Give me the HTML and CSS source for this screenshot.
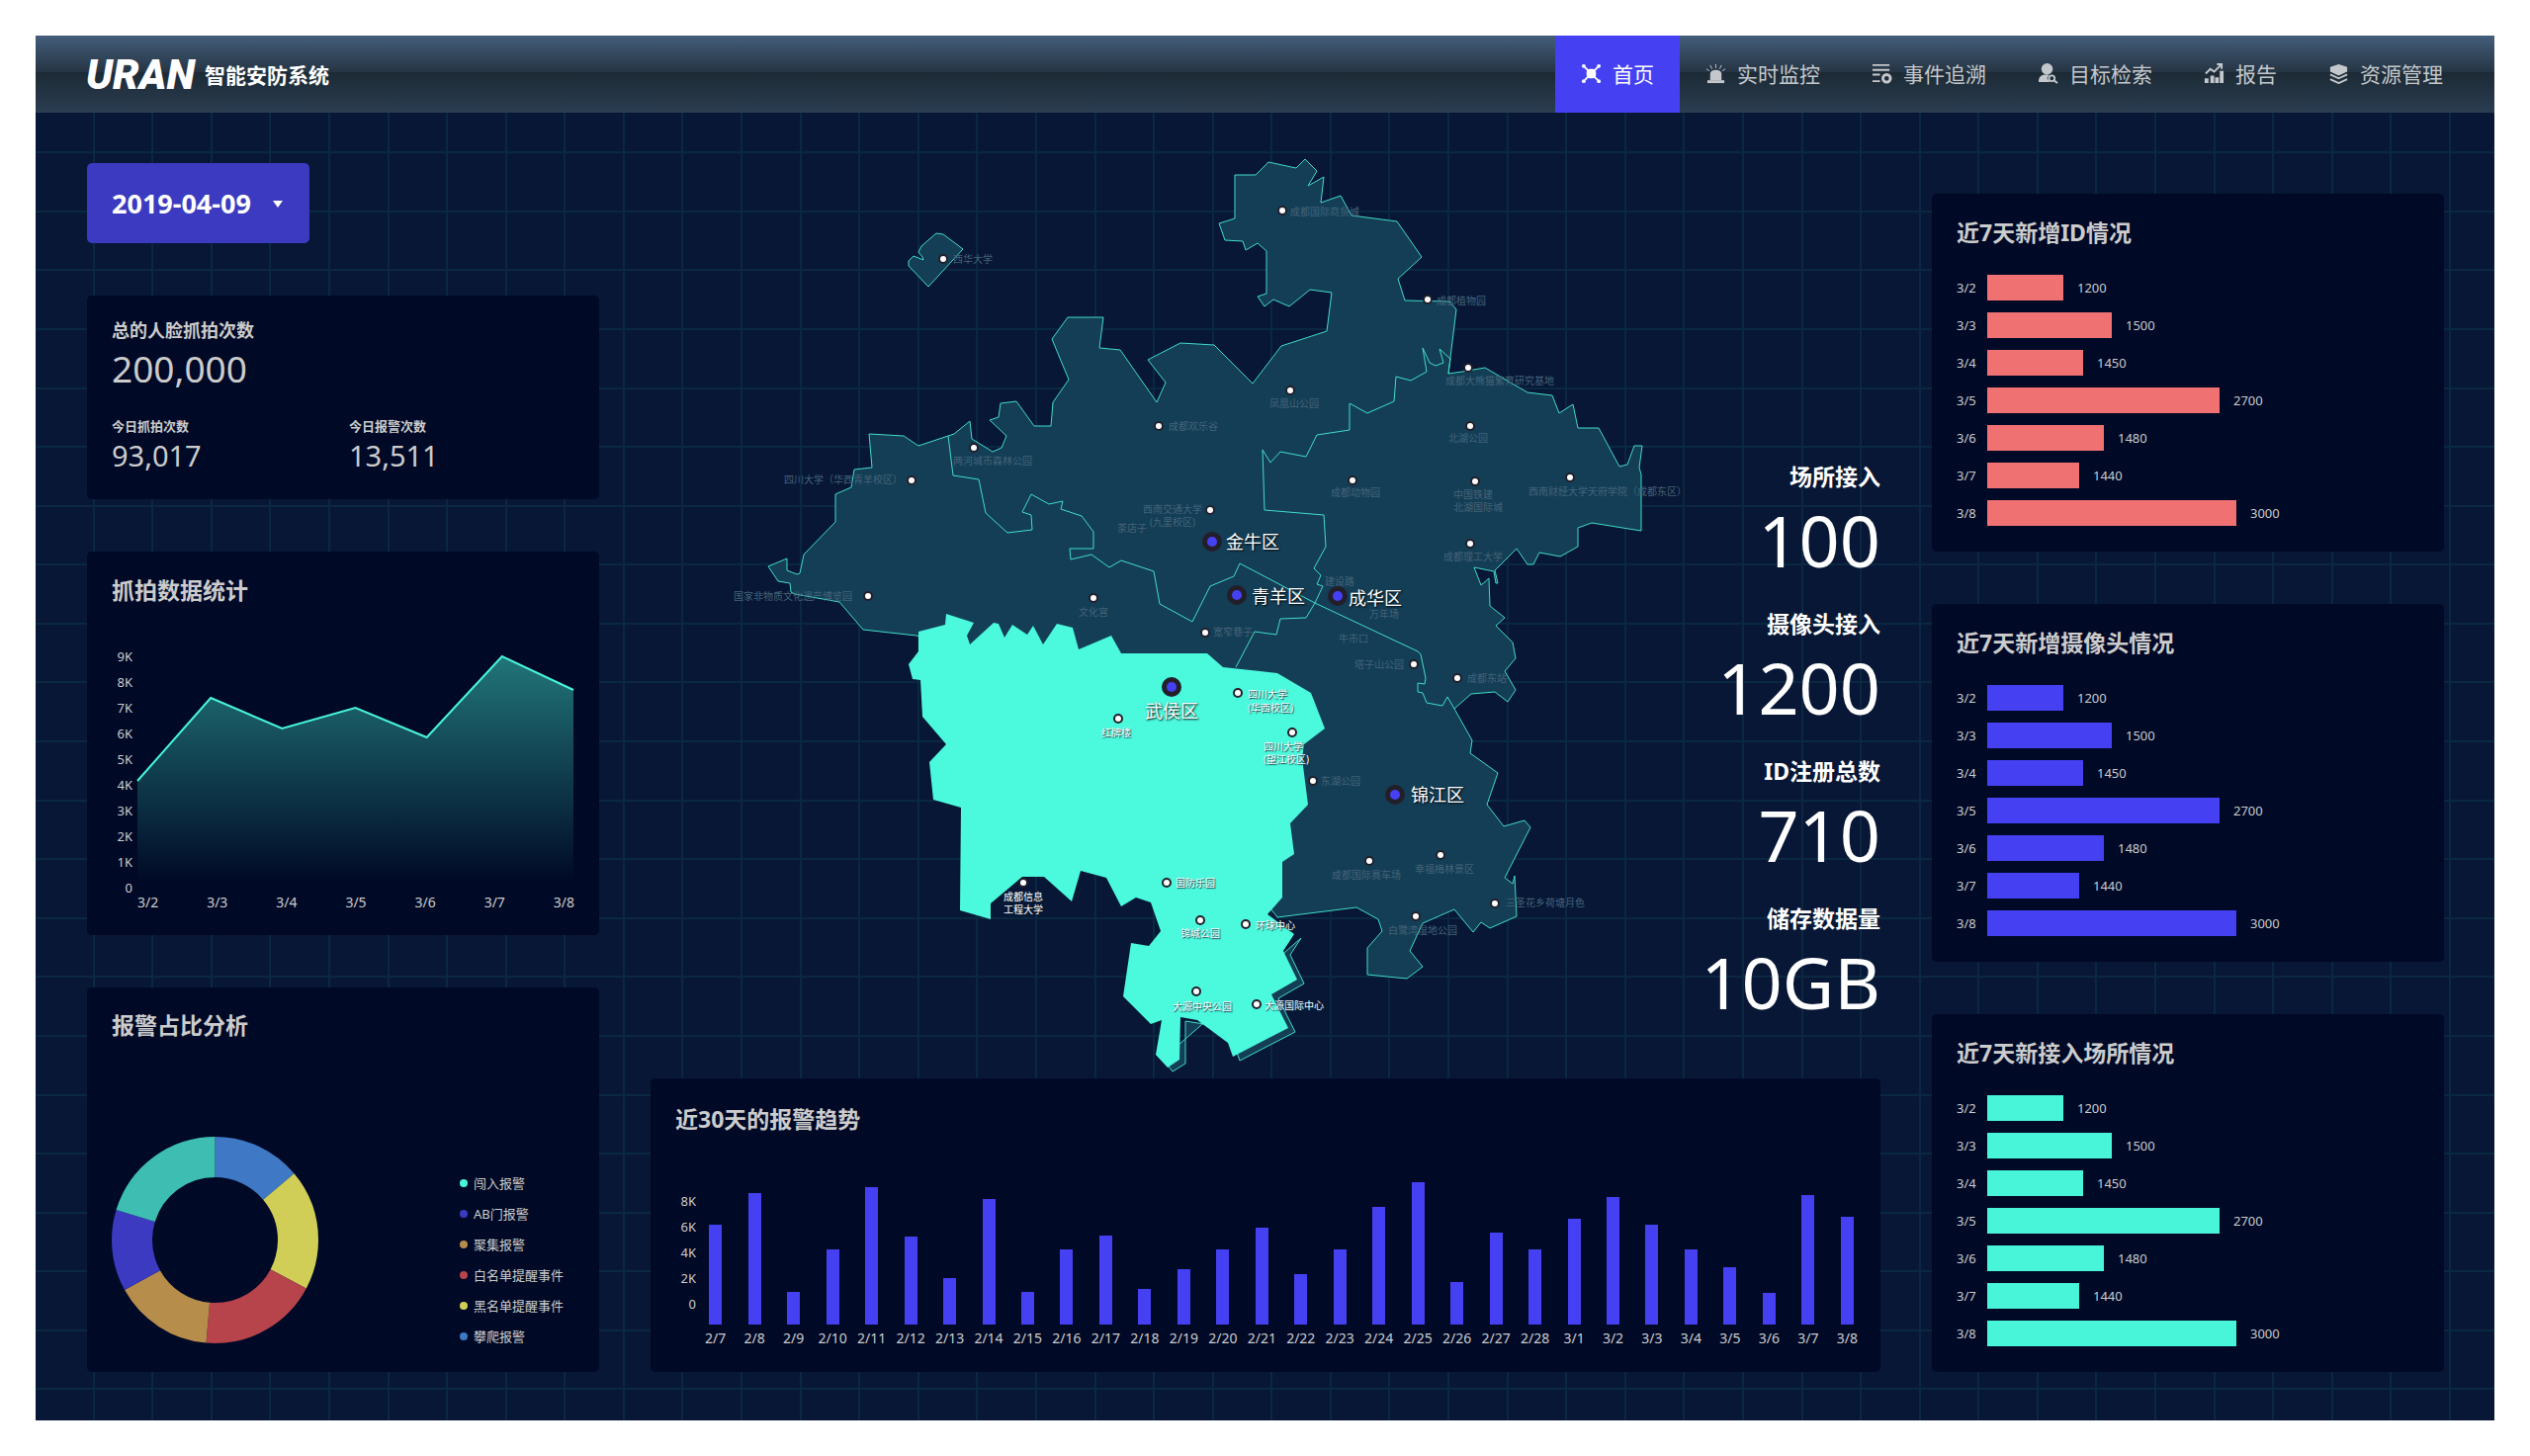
FILE: index.html
```html
<!DOCTYPE html>
<html lang="zh-CN">
<head>
  <meta charset="UTF-8">
  <meta name="viewport" content="width=device-width, initial-scale=1">
  <title>智能安防系统</title>
  <link rel="stylesheet" href="styles.css">
</head>
<body>

<div class="screen">

  <header class="topbar">
    <a class="brand" href="#">
      <span class="logo">URAN</span>
      <span class="brand-name">智能安防系统</span>
    </a>
    <nav class="nav">
      <a class="active" href="#">
        <svg viewBox="0 0 22 22"><path d="M4 4l14 14M18 4L4 18" stroke="currentColor" stroke-width="2"/><rect x="6" y="6" width="10" height="10" rx="4"/><circle cx="3" cy="3" r="2"/><circle cx="19" cy="3" r="2"/><circle cx="3" cy="19" r="2"/><circle cx="19" cy="19" r="2"/></svg>
        首页
      </a>
      <a href="#">
        <svg viewBox="0 0 22 22"><path d="M5 18v-7a6 4 0 0 1 12 0v7z"/><path d="M2 18h18v3H2z"/><path d="M11 1v4M5 2l2 4M17 2l-2 4M1 6l3 2M21 6l-3 2" stroke="currentColor" stroke-width="1"/></svg>
        实时监控
      </a>
      <a href="#">
        <svg viewBox="0 0 22 22"><path d="M1 1h18v2H1zM1 6h18v2H1zM1 11h8v2H1zM1 18h8v2H1z"/><circle cx="16" cy="16" r="4" fill="none" stroke="currentColor" stroke-width="3"/></svg>
        事件追溯
      </a>
      <a href="#">
        <svg viewBox="0 0 22 22"><circle cx="10" cy="6" r="6"/><path d="M1 20c0-6 3-8 7-8h4l-2 4 3 4z"/><circle cx="15" cy="16" r="3" fill="none" stroke="currentColor" stroke-width="2"/><path d="M17 18l4 3" stroke="currentColor" stroke-width="2"/></svg>
        目标检索
      </a>
      <a href="#">
        <svg viewBox="0 0 22 22"><path d="M1 16h4v5H1zM7 13h4v8H7zM12 15h4v6h-4zM17 8h4v13h-4z"/><path d="M2 11l5-5 4 3 7-7M14 1h5v5" fill="none" stroke="currentColor" stroke-width="2"/></svg>
        报告
      </a>
      <a href="#">
        <svg viewBox="0 0 22 22"><path d="M11 1l9 3v5l-9 4-9-4V4z"/><path d="M2 12l9 4 9-4M2 17l9 4 9-4" fill="none" stroke="currentColor" stroke-width="2"/></svg>
        资源管理
      </a>
    </nav>
  </header>

  <main class="board">

    <!-- left column -->
    <section class="column">
      <div class="date-picker">
        <select aria-label="日期">
          <option>2019-04-09</option>
        </select>
      </div>

      <div class="card totals">
        <h3>总的人脸抓拍次数</h3>
        <p class="total">200,000</p>
        <div class="today">
          <div>
            <h4>今日抓拍次数</h4>
            <p>93,017</p>
          </div>
          <div>
            <h4>今日报警次数</h4>
            <p>13,511</p>
          </div>
        </div>
      </div>

      <div class="card capture">
        <h2>抓拍数据统计</h2>
        <div class="area-chart">
          <ul class="y-axis">
            <li>9K</li><li>8K</li><li>7K</li><li>6K</li><li>5K</li><li>4K</li><li>3K</li><li>2K</li><li>1K</li><li>0</li>
          </ul>
          <div class="area-plot">
            <svg viewBox="0 0 441 229" preserveAspectRatio="none">
              <defs>
                <linearGradient id="areaFill" x1="0" y1="0" x2="0" y2="1">
                  <stop offset="0" stop-color="#48f5d9" stop-opacity=".46"/>
                  <stop offset="1" stop-color="#48f5d9" stop-opacity="0"/>
                </linearGradient>
              </defs>
              <path d="M0 126L74 42l72 31 74-21 72 30 76-82 72 34v195H0z" fill="url(#areaFill)"/>
              <path d="M0 126L74 42l72 31 74-21 72 30 76-82 72 34" fill="none" stroke="#48f5d9" stroke-width="2"/>
            </svg>
            <ul class="x-axis">
              <li>3/2</li><li>3/3</li><li>3/4</li><li>3/5</li><li>3/6</li><li>3/7</li><li>3/8</li>
            </ul>
          </div>
        </div>
      </div>

      <div class="card share">
        <h2>报警占比分析</h2>
        <div class="share-body">
          <svg class="donut" viewBox="0 0 209 209">
            <g transform="rotate(-90 104.5 104.5)" fill="none" stroke-width="41">
              <circle cx="104.5" cy="104.5" r="84" pathLength="360" stroke="#3f78c4" stroke-dasharray="50 310"/>
              <circle cx="104.5" cy="104.5" r="84" pathLength="360" stroke="#d0ce57" stroke-dasharray="68 292" stroke-dashoffset="-50"/>
              <circle cx="104.5" cy="104.5" r="84" pathLength="360" stroke="#b6444a" stroke-dasharray="67 293" stroke-dashoffset="-118"/>
              <circle cx="104.5" cy="104.5" r="84" pathLength="360" stroke="#b68d4b" stroke-dasharray="56 304" stroke-dashoffset="-185"/>
              <circle cx="104.5" cy="104.5" r="84" pathLength="360" stroke="#3b3ac0" stroke-dasharray="46 314" stroke-dashoffset="-241"/>
              <circle cx="104.5" cy="104.5" r="84" pathLength="360" stroke="#3ebdb2" stroke-dasharray="73 287" stroke-dashoffset="-287"/>
            </g>
          </svg>
          <ul class="legend">
            <li class="teal">闯入报警</li>
            <li class="indigo">AB门报警</li>
            <li class="orange">聚集报警</li>
            <li class="red">白名单提醒事件</li>
            <li class="yellow">黑名单提醒事件</li>
            <li class="blue">攀爬报警</li>
          </ul>
        </div>
      </div>
    </section>

    <!-- map and 30 day trend -->
    <section class="column middle">
      <div class="map-area">
        <svg class="map" viewBox="658 165 1244 926">
          <defs>
            <g id="pin"><circle r="5" fill="#231f2a"/><circle r="3" fill="#fff"/></g>
            <g id="hub"><circle r="10" fill="#231f2a"/><circle r="5" fill="#4541f2"/></g>
          </defs>

          <g class="district">
            <path d="M947 236L954 237 974 252 939 290 919 269 919 264 924 259 934 263 933 260 929 255 932 249z"/>
            <path d="M777 573L796 565 796 577 806 581 809 580 813 561 845 528 845 500 861 493 864 475 882 473 879 439 914 441 929 451 959 441 965 439 981 426 983 444 1004 457 1013 453 1018 441 1001 425 1010 422 1012 408 1028 406 1046 431 1063 431 1065 407 1081 384 1064 343 1080 321 1116 321 1112 352 1133 354 1170 407 1179 387 1161 364 1194 347 1228 349 1267 388 1296 350 1342 335 1347 296 1325 293 1304 310 1288 303 1279 310 1272 300 1281 297 1281 254 1272 246 1260 253 1257 244 1239 243 1233 226 1249 221 1249 177 1270 177 1283 164 1311 170 1320 161 1332 173 1323 188 1339 179 1336 205 1356 198 1367 218 1413 224 1438 260 1414 282 1421 304 1466 305 1473 313 1465 378 1479 376 1502 372 1545 397 1570 400 1577 418 1591 409 1596 433 1617 433 1638 472 1646 470 1653 451 1661 451 1658 473 1660 480 1660 537 1610 529 1596 534 1596 553 1578 563 1557 559 1551 571 1545 571 1534 555 1512 577 1515 590 1513 590 1511 578 1491 574 1498 592 1506 585 1507 613 1522 625 1513 633 1530 650 1533 666 1522 679 1533 698 1525 710 1512 700 1488 702 1471 717 1489 749 1487 762 1515 782 1504 814 1521 836 1542 830 1548 837 1522 888 1530 894 1532 886 1534 927 1507 939 1498 933 1490 943 1471 920 1439 934 1426 962 1439 978 1423 990 1383 986 1383 959 1398 942 1394 930 1372 918 1292 928 1270 900 1100 700 927 643 873 637 849 609 804 601 800 599 799 590 787 588z"/>
            <path d="M1316 949L1305 966 1319 995 1293 1010 1310 1044 1254 1073 1249 1059 1218 1036 1199 1033 1199 1076 1186 1084 1176 1071z"/>
            <path class="border" d="M959 441L964 481 990 485 997 519 1019 539 1044 536 1043 521 1034 518 1043 500 1061 510 1075 507 1073 515 1094 522 1106 538 1106 555 1082 555 1083 566 1104 561 1122 574 1134 567 1167 578 1173 611 1206 629 1224 593 1248 583 1254 570 1330 610 1434 659 1437 662 1442 686 1441 692 1434 691 1434 700 1439 701 1443 711 1459 714 1464 705 1471 717"/>
            <path class="border" d="M1465 378L1467 363 1456 353 1460 367 1452 370 1446 367 1439 352 1443 376 1427 385 1412 381 1410 406 1383 418 1365 408 1365 435 1332 440 1321 462 1295 457 1285 468 1277 455 1279 516 1339 521 1341 553 1329 575 1336 582 1332 591 1338 593 1330 610 1321 625 1295 626 1291 642 1269 639 1250 675"/>
          </g>

          <!-- 武侯区 -->
          <path fill="#4bf9dd" d="M929 639L956 632 957 621 985 630 978 643 981 652 1005 630 1010 631 1016 645 1024 632 1039 642 1045 633 1055 652 1069 631 1085 635 1091 657 1124 643 1134 661 1221 661 1237 675 1292 681 1326 701 1340 737 1319 753 1317 767 1323 814 1305 833 1309 864 1297 872 1297 908 1282 925 1309 945 1298 962 1312 991 1286 1006 1303 1040 1247 1069 1242 1055 1211 1032 1194 1029 1193 1072 1181 1080 1169 1067 1175 1032 1164 1036 1136 1008 1144 954 1162 957 1174 942 1164 913 1149 908 1134 917 1119 888 1093 881 1084 912 1056 887 1034 887 1002 914 1002 930 971 921 972 817 944 809 940 771 957 753 933 725 931 688 923 687 919 672 929 659z"/>

          <g class="places">
            <text x="964" y="262">西华大学</text>
            <text x="964" y="466">两河城市森林公园</text>
            <text x="793" y="485">四川大学（华西青羊校区）</text>
            <text x="742" y="603">国家非物质文化遗产博览园</text>
            <text x="1091" y="619">文化宫</text>
            <text x="1182" y="431">成都欢乐谷</text>
            <text x="1156" y="515">西南交通大学</text>
            <text x="1163" y="528">(九里校区)</text>
            <text x="1130" y="534">茶店子</text>
            <text x="1305" y="214">成都国际商贸城</text>
            <text x="1284" y="408">凤凰山公园</text>
            <text x="1453" y="304">成都植物园</text>
            <text x="1462" y="385">成都大熊猫繁育研究基地</text>
            <text x="1465" y="443">北湖公园</text>
            <text x="1346" y="498">成都动物园</text>
            <text x="1470" y="500">中国铁建</text>
            <text x="1470" y="513">北湖国际城</text>
            <text x="1546" y="497">西南财经大学天府学院（成都东区）</text>
            <text x="1460" y="563">成都理工大学</text>
            <text x="1340" y="588">建设路</text>
            <text x="1385" y="621">万年场</text>
            <text x="1354" y="646">牛市口</text>
            <text x="1227" y="639">宽窄巷子</text>
            <text x="1370" y="672">塔子山公园</text>
            <text x="1484" y="686">成都东站</text>
            <text x="1336" y="790">东湖公园</text>
            <text x="1347" y="885">成都国际赛车场</text>
            <text x="1431" y="879">幸福梅林景区</text>
            <text x="1523" y="913">三圣花乡荷塘月色</text>
            <text x="1404" y="941">白鹭湾湿地公园</text>
          </g>

          <g class="places selected">
            <text x="1262" y="702">四川大学</text>
            <text x="1262" y="716">(华西校区)</text>
            <text x="1278" y="755">四川大学</text>
            <text x="1278" y="768">(望江校区)</text>
            <text x="1114" y="741">红牌楼</text>
            <text x="1015" y="907">成都信息</text>
            <text x="1015" y="920">工程大学</text>
            <text x="1189" y="893">国防乐园</text>
            <text x="1194" y="944">锦城公园</text>
            <text x="1270" y="936">环球中心</text>
            <text x="1186" y="1018">大源中央公园</text>
            <text x="1279" y="1017">大源国际中心</text>
          </g>

          <g class="hubs">
            <use href="#hub" x="1226" y="548"/><text x="1240" y="548">金牛区</text>
            <use href="#hub" x="1251" y="602"/><text x="1266" y="603">青羊区</text>
            <use href="#hub" x="1353" y="603"/><text x="1364" y="605">成华区</text>
            <use href="#hub" x="1185" y="695"/><text x="1158" y="719">武侯区</text>
            <use href="#hub" x="1411" y="804"/><text x="1427" y="804">锦江区</text>
          </g>

          <use href="#pin" x="954" y="262"/>
          <use href="#pin" x="985" y="453"/>
          <use href="#pin" x="922" y="486"/>
          <use href="#pin" x="878" y="603"/>
          <use href="#pin" x="1106" y="605"/>
          <use href="#pin" x="1172" y="431"/>
          <use href="#pin" x="1224" y="516"/>
          <use href="#pin" x="1297" y="213"/>
          <use href="#pin" x="1305" y="395"/>
          <use href="#pin" x="1444" y="303"/>
          <use href="#pin" x="1485" y="372"/>
          <use href="#pin" x="1487" y="431"/>
          <use href="#pin" x="1368" y="486"/>
          <use href="#pin" x="1492" y="487"/>
          <use href="#pin" x="1588" y="483"/>
          <use href="#pin" x="1487" y="550"/>
          <use href="#pin" x="1219" y="640"/>
          <use href="#pin" x="1430" y="672"/>
          <use href="#pin" x="1474" y="686"/>
          <use href="#pin" x="1252" y="701"/>
          <use href="#pin" x="1307" y="741"/>
          <use href="#pin" x="1328" y="790"/>
          <use href="#pin" x="1385" y="871"/>
          <use href="#pin" x="1457" y="865"/>
          <use href="#pin" x="1512" y="914"/>
          <use href="#pin" x="1432" y="927"/>
          <use href="#pin" x="1260" y="935"/>
          <use href="#pin" x="1271" y="1016"/>
          <use href="#pin" x="1131" y="727"/>
          <use href="#pin" x="1035" y="893"/>
          <use href="#pin" x="1180" y="893"/>
          <use href="#pin" x="1214" y="931"/>
          <use href="#pin" x="1210" y="1003"/>
        </svg>

        <dl class="figures">
          <dt>场所接入</dt>
          <dd>100</dd>
          <dt>摄像头接入</dt>
          <dd>1200</dd>
          <dt>ID注册总数</dt>
          <dd>710</dd>
          <dt>储存数据量</dt>
          <dd>10GB</dd>
        </dl>
      </div>

      <div class="card trend">
        <h2>近30天的报警趋势</h2>
        <div class="trend-chart">
          <ul class="y-axis">
            <li>8K</li><li>6K</li><li>4K</li><li>2K</li><li>0</li>
          </ul>
          <ul class="columns">
            <li><i style="height:101px"></i>2/7</li>
            <li><i style="height:133px"></i>2/8</li>
            <li><i style="height:33px"></i>2/9</li>
            <li><i style="height:76px"></i>2/10</li>
            <li><i style="height:139px"></i>2/11</li>
            <li><i style="height:89px"></i>2/12</li>
            <li><i style="height:47px"></i>2/13</li>
            <li><i style="height:127px"></i>2/14</li>
            <li><i style="height:33px"></i>2/15</li>
            <li><i style="height:76px"></i>2/16</li>
            <li><i style="height:90px"></i>2/17</li>
            <li><i style="height:36px"></i>2/18</li>
            <li><i style="height:56px"></i>2/19</li>
            <li><i style="height:76px"></i>2/20</li>
            <li><i style="height:98px"></i>2/21</li>
            <li><i style="height:51px"></i>2/22</li>
            <li><i style="height:76px"></i>2/23</li>
            <li><i style="height:119px"></i>2/24</li>
            <li><i style="height:144px"></i>2/25</li>
            <li><i style="height:43px"></i>2/26</li>
            <li><i style="height:93px"></i>2/27</li>
            <li><i style="height:76px"></i>2/28</li>
            <li><i style="height:107px"></i>3/1</li>
            <li><i style="height:129px"></i>3/2</li>
            <li><i style="height:101px"></i>3/3</li>
            <li><i style="height:76px"></i>3/4</li>
            <li><i style="height:58px"></i>3/5</li>
            <li><i style="height:32px"></i>3/6</li>
            <li><i style="height:131px"></i>3/7</li>
            <li><i style="height:109px"></i>3/8</li>
          </ul>
        </div>
      </div>
    </section>

    <!-- right column -->
    <section class="column right">
      <div class="card week ids">
        <h2>近7天新增ID情况</h2>
        <ul class="rows">
          <li><span>3/2</span><i style="width:77px"></i>1200</li>
          <li><span>3/3</span><i style="width:126px"></i>1500</li>
          <li><span>3/4</span><i style="width:97px"></i>1450</li>
          <li><span>3/5</span><i style="width:235px"></i>2700</li>
          <li><span>3/6</span><i style="width:118px"></i>1480</li>
          <li><span>3/7</span><i style="width:93px"></i>1440</li>
          <li><span>3/8</span><i style="width:252px"></i>3000</li>
        </ul>
      </div>

      <div class="card week cameras">
        <h2>近7天新增摄像头情况</h2>
        <ul class="rows">
          <li><span>3/2</span><i style="width:77px"></i>1200</li>
          <li><span>3/3</span><i style="width:126px"></i>1500</li>
          <li><span>3/4</span><i style="width:97px"></i>1450</li>
          <li><span>3/5</span><i style="width:235px"></i>2700</li>
          <li><span>3/6</span><i style="width:118px"></i>1480</li>
          <li><span>3/7</span><i style="width:93px"></i>1440</li>
          <li><span>3/8</span><i style="width:252px"></i>3000</li>
        </ul>
      </div>

      <div class="card week sites">
        <h2>近7天新接入场所情况</h2>
        <ul class="rows">
          <li><span>3/2</span><i style="width:77px"></i>1200</li>
          <li><span>3/3</span><i style="width:126px"></i>1500</li>
          <li><span>3/4</span><i style="width:97px"></i>1450</li>
          <li><span>3/5</span><i style="width:235px"></i>2700</li>
          <li><span>3/6</span><i style="width:118px"></i>1480</li>
          <li><span>3/7</span><i style="width:93px"></i>1440</li>
          <li><span>3/8</span><i style="width:252px"></i>3000</li>
        </ul>
      </div>
    </section>

  </main>
</div>

</body>
</html>
```
FILE: styles.css
```css
* {
  box-sizing: border-box;
  margin: 0;
  padding: 0;
}
body {
  background: #fff;
  color: #ccc;
  font-family: "Noto Sans", "Noto Sans CJK SC", sans-serif;
  font-size: 13px;
}
ul {
  list-style: none;
}
a {
  color: inherit;
  text-decoration: none;
}

.screen {
  /* 46px cell on a 1920px wide design */
  --cell: calc((100vw - 72px) * 46 / 1920);
  margin: 36px;
  background-color: #071735;
  background-image:
    repeating-linear-gradient(to right, transparent 0, transparent calc(var(--cell) - 2px), #0a2841 calc(var(--cell) - 2px), #0a2841 var(--cell)),
    repeating-linear-gradient(to bottom, transparent 0, transparent calc(var(--cell) - 2px), #0a2841 calc(var(--cell) - 2px), #0a2841 var(--cell));
}

/* header */
.topbar {
  display: flex;
  justify-content: space-between;
  height: 78px;
  padding: 0 26px 0 51px;
  background: linear-gradient(to bottom, #435d7a 0%, #263544 47%, #1c2a35 48%, #2b3d51 100%);
}
.brand {
  display: flex;
  align-items: center;
  gap: 10px;
  color: #fff;
}
.logo {
  font-family: Roboto, sans-serif;
  font-size: 42px;
  font-weight: 900;
  font-style: italic;
}
.brand-name {
  font-size: 21px;
  font-weight: bold;
}
.nav {
  display: flex;
}
.nav a {
  display: flex;
  align-items: center;
  gap: 11px;
  padding: 0 26px 2px;
  font-size: 21px;
  color: #c4c8cc;
}
.nav a.active {
  background: #4541f2;
  color: #fff;
}
.nav svg {
  width: 21px;
  height: 21px;
  fill: currentColor;
}

/* layout */
.board {
  display: grid;
  grid-template-columns: 518px 1fr 518px;
  gap: 52px;
  padding: 51px 51px 49px 52px;
}
.column {
  display: flex;
  flex-direction: column;
  gap: 53px;
  min-width: 0;
}
.middle {
  justify-content: space-between;
  gap: 0;
}
.right {
  justify-content: flex-end;
}
.card {
  padding: 24px 25px;
  border-radius: 5px;
  background: #000926;
}
.card h2 {
  font-size: 23px;
  line-height: 30px;
}

/* date */
.date-picker {
  position: relative;
  width: 225px;
}
.date-picker::after {
  content: "";
  position: absolute;
  top: 38px;
  right: 27px;
  border: 5px solid transparent;
  border-top: 7px solid #fff;
  border-bottom: 0;
  pointer-events: none;
}
.date-picker select {
  display: block;
  width: 100%;
  height: 81px;
  padding: 0 25px;
  border: 0;
  border-radius: 5px;
  appearance: none;
  background: #3b3ac0;
  color: #fff;
  font-family: inherit;
  font-size: 27px;
  font-weight: bold;
}

/* totals */
.totals {
  padding-top: 25px;
  padding-bottom: 29px;
}
.totals h3 {
  font-size: 18px;
  line-height: 20px;
}
.total {
  margin-top: 7px;
  font-size: 37px;
  line-height: 44px;
}
.today {
  display: grid;
  grid-template-columns: 1fr 1fr;
  gap: 12px;
  margin-top: 27px;
}
.today h4 {
  font-size: 13px;
  line-height: 18px;
}
.today p {
  margin-top: 6px;
  font-size: 29px;
  line-height: 30px;
}

/* charts */
.y-axis {
  width: 21px;
  font-size: 13px;
  line-height: 26px;
  text-align: right;
}
.capture {
  padding-bottom: 23px;
}
.area-chart {
  display: flex;
  gap: 5px;
  margin-top: 39px;
}
.area-plot {
  flex: 1;
  padding-top: 13px;
}
.area-plot svg {
  display: block;
  width: 100%;
  height: 229px;
  overflow: visible;
}
.x-axis {
  display: flex;
  justify-content: space-between;
  margin-top: 10px;
  font-size: 14px;
  line-height: 20px;
}

.share {
  padding-top: 23px;
  padding-bottom: 27px;
}
.share-body {
  display: flex;
  justify-content: space-between;
  align-items: flex-end;
  margin-top: 98px;
}
.donut {
  width: 209px;
  height: 209px;
  margin-bottom: 2px;
}
.legend {
  display: flex;
  flex-direction: column;
  gap: 13px;
  width: 116px;
  line-height: 18px;
}
.legend li {
  display: flex;
  align-items: center;
  gap: 6px;
  white-space: nowrap;
}
.legend li::before {
  content: "";
  width: 8px;
  height: 8px;
  border-radius: 50%;
  background: var(--dot);
}
.teal { --dot: #48f5d9; }
.indigo { --dot: #3b3ac0; }
.orange { --dot: #b68d4b; }
.red { --dot: #b6444a; }
.yellow { --dot: #d0ce57; }
.blue { --dot: #3f78c4; }

.trend {
  padding: 26px 14px 24px 25px;
}
.trend-chart {
  display: flex;
  align-items: flex-end;
  margin-top: 49px;
}
.trend-chart .y-axis {
  padding-bottom: 32px;
}
.columns {
  flex: 1;
  display: flex;
  align-items: flex-end;
  font-size: 14px;
  line-height: 20px;
}
.columns li {
  flex: 1;
  display: flex;
  flex-direction: column;
  align-items: center;
  gap: 4px;
  width: 0;
}
.columns i {
  width: 13px;
  background: #4541f2;
}

.week {
  padding-bottom: 26px;
}
.rows {
  display: flex;
  flex-direction: column;
  gap: 12px;
  margin-top: 28px;
}
.rows li {
  display: flex;
  align-items: center;
  line-height: 26px;
}
.rows span {
  width: 31px;
}
.rows i {
  height: 26px;
  margin-right: 14px;
  background: var(--bar);
}
.ids { --bar: #f07172; }
.cameras { --bar: #4541f2; }
.sites { --bar: #48f5d9; }

/* map */
.map-area {
  display: grid;
}
.map,
.figures {
  grid-area: 1 / 1;
}
.map {
  display: block;
  width: 100%;
  overflow: visible;
}
.map text {
  dominant-baseline: central;
}
.district path {
  fill: #133e56;
  stroke: #43dcc8;
  stroke-width: 1;
}
.district .border {
  fill: none;
}
.places text {
  font-size: 10px;
  fill: #456379;
}
.selected text {
  fill: #fff;
  text-shadow: 1px 1px 1px #12303c;
}
.hubs text {
  font-size: 18px;
  fill: #fff;
  text-shadow: 1px 1px 2px #000;
}
.figures {
  justify-self: end;
  align-self: end;
  margin-bottom: 28px;
  color: #fff;
  text-align: right;
}
.figures dt {
  font-size: 23px;
  font-weight: bold;
  line-height: 30px;
}
.figures dd {
  margin: 9px 0 30px;
  font-size: 72px;
  line-height: 80px;
}
```
